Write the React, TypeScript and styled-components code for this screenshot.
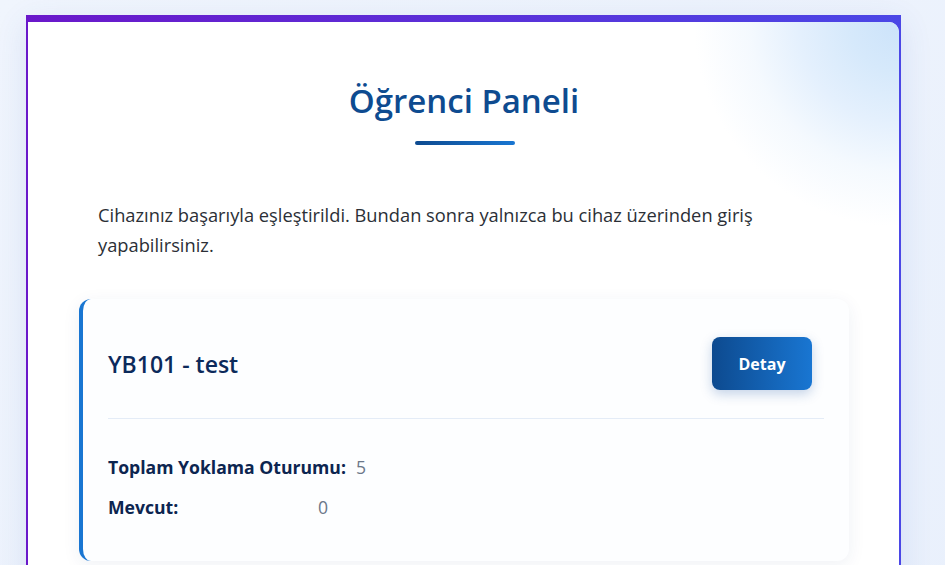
import React from "react";
import styled, { createGlobalStyle } from "styled-components";

const Global = createGlobalStyle`
  html, body { margin: 0; padding: 0; }
  body {
    background: linear-gradient(135deg, #f0f5fd 0%, #e9f0fc 100%);
    font-family: "Open Sans", "Noto Sans", sans-serif;
    min-height: 565px;
    overflow: hidden;
  }
`;

const Page = styled.div`
  padding: 15px 44px 0 26px;
`;

const Frame = styled.div`
  background: linear-gradient(90deg, #6a18ca 0%, #4b47e6 100%);
  padding: 7px 2px 0 2px;
  box-shadow: 0 8px 30px rgba(60, 90, 180, 0.12);
  min-height: 560px;
`;

const Inner = styled.div`
  position: relative;
  background: #ffffff;
  min-height: 560px;
  padding: 60px 50px 40px 51px;
  overflow: hidden;
  border-top-right-radius: 10px;
`;

const Glow = styled.div`
  position: absolute;
  top: -220px;
  right: -220px;
  width: 440px;
  height: 440px;
  border-radius: 50%;
  background: radial-gradient(
    circle 210px at center,
    #cce3fa 0px,
    #d6e9fb 50px,
    #e4f0fd 100px,
    rgba(242, 248, 254, 0.8) 150px,
    rgba(255, 255, 255, 0) 205px
  );
  pointer-events: none;
`;

const Title = styled.h1`
  position: relative;
  margin: 0;
  text-align: center;
  font-size: 33px;
  font-weight: 600;
  line-height: 38px;
  color: #0e4b90;
  padding-bottom: 25px;
  &::after {
    content: "";
    position: absolute;
    left: 50%;
    bottom: 0;
    width: 100px;
    height: 4px;
    margin-left: -49px;
    border-radius: 2px;
    background: linear-gradient(90deg, #0d4a8f, #1976d2);
  }
`;

const Intro = styled.p`
  position: relative;
  margin: 55px 0 39px 0;
  padding: 0 19px;
  font-size: 18.3px;
  line-height: 30px;
  color: #2b2f36;
`;

const Card = styled.div`
  position: relative;
  background: #fdfeff;
  border-left: 4px solid #1976d2;
  border-radius: 12px;
  box-shadow: 0 4px 18px rgba(30, 60, 120, 0.07);
  padding: 13px 25px 42px 25px;
`;

const CardHeader = styled.div`
  display: flex;
  align-items: center;
  justify-content: space-between;
  padding: 25px 12px 28px 0;
  border-bottom: 1px solid #e4ecf7;
`;

const CourseName = styled.h2`
  margin: 0;
  font-size: 23px;
  font-weight: 600;
  color: #0c2a5b;
`;

const DetailButton = styled.button`
  width: 100px;
  height: 53px;
  border: none;
  border-radius: 8px;
  background: linear-gradient(90deg, #0d4a8f, #1976d2);
  color: #ffffff;
  font-family: inherit;
  font-size: 16px;
  font-weight: 700;
  box-shadow: 0 4px 12px rgba(25, 80, 160, 0.25);
  cursor: pointer;
`;

const Stats = styled.div`
  display: flex;
  flex-direction: column;
  gap: 16px;
  padding-top: 36px;
`;

const StatRow = styled.div`
  display: flex;
  align-items: center;
  line-height: 24px;
  font-size: 17.6px;
`;

const StatLabel = styled.span`
  min-width: 200px;
  margin-right: 10px;
  font-weight: 700;
  color: #0c2550;
`;

const StatValue = styled.span`
  color: #6b7789;
`;

const stats = [
  { label: "Toplam Yoklama Oturumu:", value: "5" },
  { label: "Mevcut:", value: "0" },
];

export default function App() {
  return (
    <>
      <Global />
      <Page>
        <Frame>
          <Inner>
            <Glow />
            <Title>Öğrenci Paneli</Title>
            <Intro>
              Cihazınız başarıyla eşleştirildi. Bundan sonra yalnızca bu cihaz üzerinden giriş yapabilirsiniz.
            </Intro>
            <Card>
              <CardHeader>
                <CourseName>YB101 - test</CourseName>
                <DetailButton>Detay</DetailButton>
              </CardHeader>
              <Stats>
                {stats.map((s) => (
                  <StatRow key={s.label}>
                    <StatLabel>{s.label}</StatLabel>
                    <StatValue>{s.value}</StatValue>
                  </StatRow>
                ))}
              </Stats>
            </Card>
          </Inner>
        </Frame>
      </Page>
    </>
  );
}
